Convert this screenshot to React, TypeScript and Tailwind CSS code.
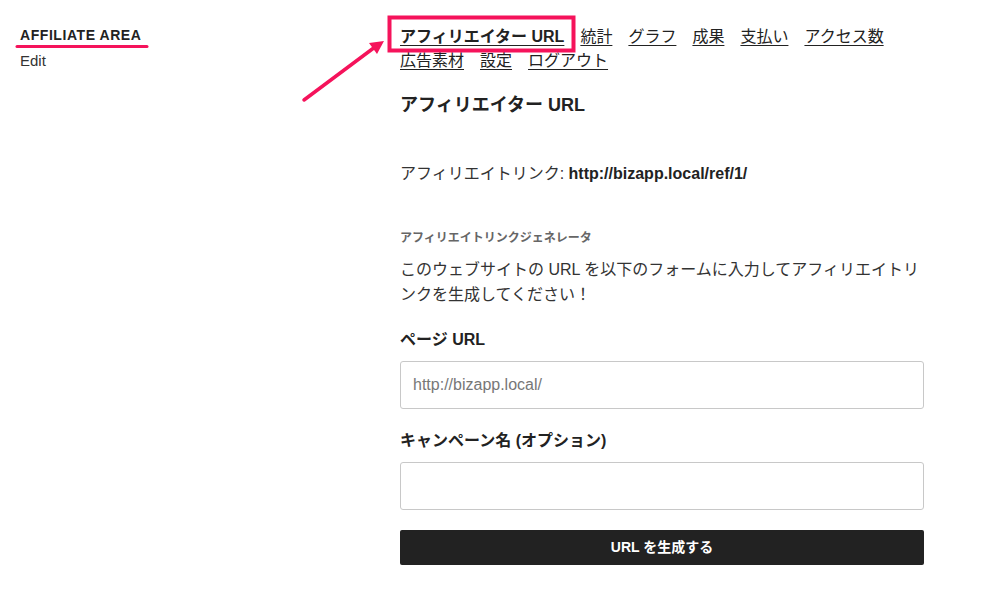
import type { FC } from "react";

const font = { fontFamily: '"Liberation Sans", "Noto Sans CJK JP", sans-serif' };

const navLinks = ["アフィリエイター URL", "統計", "グラフ", "成果", "支払い", "アクセス数", "広告素材", "設定", "ログアウト"];

const Sidebar: FC = () => (
  <aside className="w-[400px] shrink-0 pl-5 pt-[26px]">
    <h2 className="text-[14px] leading-[18px] font-bold uppercase tracking-[0.04em] text-[#222]">Affiliate Area</h2>
    <a className="mt-[8px] block text-[15px] leading-[18px] text-[#333]">Edit</a>
  </aside>
);

const Nav: FC = () => (
  <nav className="flex flex-wrap gap-x-4 text-[16px] leading-6 text-[#222]">
    {navLinks.map((label, i) => (
      <a key={label} className={`underline underline-offset-[3px] ${i === 0 ? "font-bold" : ""}`}>
        {label}
      </a>
    ))}
  </nav>
);

const Field: FC<{ label: string; placeholder?: string }> = ({ label, placeholder }) => (
  <div>
    <label className="block text-[16px] leading-6 font-bold text-[#222]">{label}</label>
    <input
      className="mt-[9px] block h-[48px] w-full rounded-[3px] border border-[#c8c8c8] px-3 text-[16px] text-[#333] placeholder:text-[#777] outline-none"
      placeholder={placeholder}
      style={font}
    />
  </div>
);

export default function App() {
  return (
    <div className="relative min-h-[593px] w-[988px] bg-white" style={font}>
      <div className="flex">
        <Sidebar />
        <main className="w-[524px] pt-[25px]">
          <Nav />
          <h1 className="mt-[19px] text-[18px] leading-[27px] font-bold text-[#222]">アフィリエイター URL</h1>
          <p className="mt-[43px] text-[16px] leading-6 text-[#333]">
            アフィリエイトリンク: <strong className="font-bold text-[#222]">http://bizapp.local/ref/1/</strong>
          </p>
          <h3 className="mt-[43px] text-[12px] leading-[18px] font-bold text-[#666]">アフィリエイトリンクジェネレータ</h3>
          <p className="mt-[10px] text-[16px] leading-[25px] text-[#333]">
            このウェブサイトの URL を以下のフォームに入力してアフィリエイトリンクを生成してください！
          </p>
          <div className="mt-[21px] flex flex-col gap-[20px]">
            <Field label="ページ URL" placeholder="http://bizapp.local/" />
            <Field label="キャンペーン名 (オプション)" />
            <button className="h-[35px] w-full rounded-[2px] bg-[#222] text-[14px] font-bold text-white">
              URL を生成する
            </button>
          </div>
        </main>
      </div>

      {/* annotations */}
      <svg className="pointer-events-none absolute left-0 top-0" width="988" height="593">
        <line x1="17" y1="46.5" x2="147" y2="46.5" stroke="#f5135b" strokeWidth="3" strokeLinecap="round" />
        <rect x="389.5" y="17.5" width="184" height="33" fill="none" stroke="#f5135b" strokeWidth="4" />
        <line x1="304" y1="100" x2="375" y2="47" stroke="#f5135b" strokeWidth="3.5" strokeLinecap="round" />
        <polygon points="384,41 369,43 377,54" fill="#f5135b" />
      </svg>
    </div>
  );
}
